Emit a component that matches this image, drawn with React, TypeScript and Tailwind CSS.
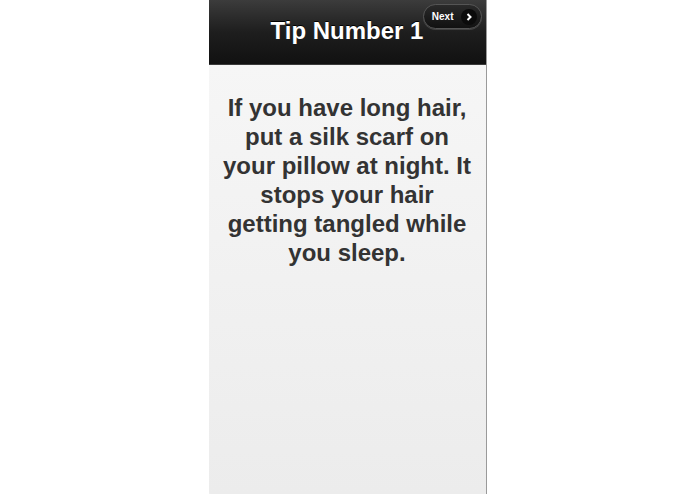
export default function App() {
  return (
    <div className="flex h-[494px] w-[695px] justify-center bg-white font-['Liberation_Sans',Arial,sans-serif]">
      <div className="flex w-[278px] flex-col border-r border-[#9a9a9a] bg-[#efefef]">
        <header className="relative flex h-[65px] shrink-0 items-center justify-center border-b border-[#3a3a3a] bg-gradient-to-b from-[#3c3c3c] via-[#1e1e1e] to-[#111111]">
          <h1 className="mt-[-2px] text-[24px] font-bold text-white [text-shadow:0_-1px_0_#000]">
            Tip Number 1
          </h1>
          <button className="absolute right-[4px] top-[4px] flex h-[25px] items-center gap-[7px] rounded-full border border-[#555] bg-gradient-to-b from-[#2a2a2a] to-[#111] pl-[8px] pr-[4px] shadow-[0_1px_0_rgba(255,255,255,0.15)]">
            <span className="text-[10px] font-bold text-white">Next</span>
            <span className="flex h-[16px] w-[16px] items-center justify-center rounded-full bg-[#0b0b0b]">
              <svg width="8" height="8" viewBox="0 0 8 8">
                <path d="M2.5 1 L5.5 4 L2.5 7" fill="none" stroke="#fff" strokeWidth="2" />
              </svg>
            </span>
          </button>
        </header>
        <main className="flex-1 rounded-b-[3px] bg-gradient-to-b from-[#f6f6f6] to-[#ececec] px-[14px] pt-[28px]">
          <p className="text-center text-[24px] font-bold leading-[29px] text-[#333]">
            If you have long hair, put a silk scarf on your pillow at night. It stops your hair getting tangled while you sleep.
          </p>
        </main>
      </div>
    </div>
  );
}
